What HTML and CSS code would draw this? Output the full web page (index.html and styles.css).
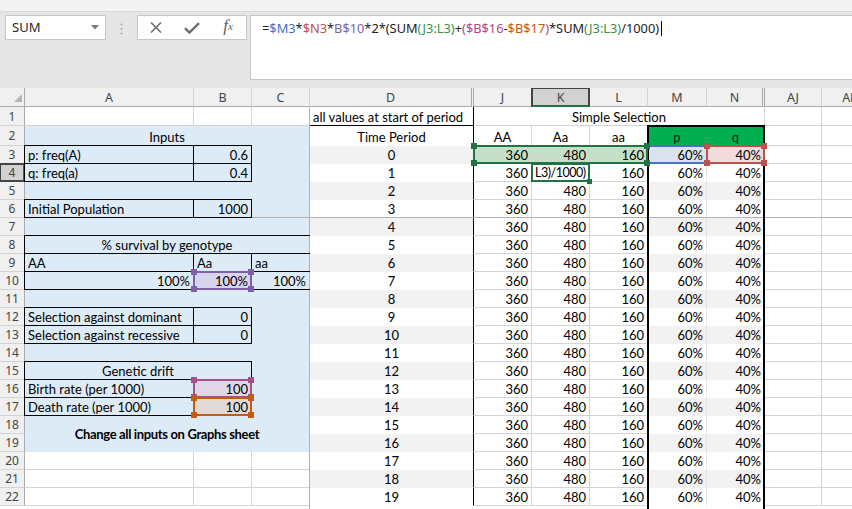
FILE: index.html
```html
<!DOCTYPE html>
<html>
<head>
<meta charset="utf-8">
<link rel="stylesheet" href="styles.css">
</head>
<body>
<div class="app">
  <div class="topstrip"></div>
  <div class="toolbar">
    <div class="namebox"><span>SUM</span><svg width="8" height="5" viewBox="0 0 8 5"><path d="M0 0H8L4 4.5Z" fill="#7a7a7a"/></svg></div>
    <div class="grip"><svg width="3" height="12" viewBox="0 0 3 12"><circle cx="1.5" cy="1.5" r="1" fill="#a8a8a8"/><circle cx="1.5" cy="6" r="1" fill="#a8a8a8"/><circle cx="1.5" cy="10.5" r="1" fill="#a8a8a8"/></svg></div>
    <div class="fxbox">
      <span class="ic"><svg width="12" height="11" viewBox="0 0 12 11"><path d="M1 0.5L11 10.5M11 0.5L1 10.5" stroke="#6e6e6e" stroke-width="1.6" fill="none"/></svg></span>
      <span class="ic"><svg width="16" height="12" viewBox="0 0 16 12"><path d="M1 6.2L5.4 10.6L15 1.2" fill="none" stroke="#6e6e6e" stroke-width="2.4"/></svg></span>
      <span class="ic fx">f<sub>x</sub></span>
    </div>
    <div class="formula"><span>=</span><span class="k1">$M3</span>*<span class="k2">$N3</span>*<span class="k3">B$10</span>*2*(SUM<span class="k4">(J3:L3)</span>+<span class="k5">($B$16</span>-<span class="k6">$B$17</span><span class="k5">)</span>*SUM<span class="k4">(J3:L3)</span>/1000)<span class="caret"></span></div>
  </div>

  <div class="sheet">
    <div class="cells">
      <!-- column headers -->
      <div class="corner"><svg width="25" height="19" viewBox="0 0 25 19"><path d="M22 6V14H14Z" fill="#b5b5b5"/></svg></div>
      <div class="ch">A</div><div class="ch">B</div><div class="ch">C</div><div class="ch hid">D</div>
      <div class="ch">J</div><div class="ch sel">K</div><div class="ch">L</div><div class="ch">M</div><div class="ch hid">N</div>
      <div class="ch">AJ</div><div class="ch">AK</div>

      <!-- row 1 -->
      <div class="rh">1</div><div class="c"></div><div class="c"></div><div class="c"></div>
      <div class="c d w dk">all values at start of period</div>
      <div class="c m span5">Simple Selection</div>
      <div class="c"></div><div class="c"></div>

      <!-- row 2 -->
      <div class="rh">2</div><div class="c b m span3">Inputs</div>
      <div class="c d w m">Time Period</div>
      <div class="c m">AA</div><div class="c m">Aa</div><div class="c m">aa</div>
      <div class="c m gh">p</div><div class="c m gh">q</div>
      <div class="c"></div><div class="c"></div>

      <!-- row 3 -->
      <div class="rh">3</div><div class="c b">p: freq(A)</div><div class="c b r">0.6</div><div class="c b"></div>
      <div class="c d m">0</div>
      <div class="c r fg">360</div><div class="c r fg">480</div><div class="c r fg">160</div>
      <div class="c r fb">60%</div><div class="c r fr">40%</div>
      <div class="c"></div><div class="c"></div>

      <!-- row 4 -->
      <div class="rh sel">4</div><div class="c b">q: freq(a)</div><div class="c b r">0.4</div><div class="c b"></div>
      <div class="c d w m">1</div>
      <div class="c r">360</div><div class="c edit">L3)/1000)</div><div class="c r">160</div>
      <div class="c r mn w">60%</div><div class="c r mn w">40%</div>
      <div class="c"></div><div class="c"></div>

      <!-- row 5 -->
      <div class="rh">5</div><div class="c b"></div><div class="c b"></div><div class="c b"></div>
      <div class="c d m">2</div>
      <div class="c r">360</div><div class="c r">480</div><div class="c r">160</div>
      <div class="c r mn">60%</div><div class="c r mn">40%</div>
      <div class="c"></div><div class="c"></div>

      <!-- row 6 -->
      <div class="rh">6</div><div class="c b">Initial Population</div><div class="c b r">1000</div><div class="c b"></div>
      <div class="c d w m">3</div>
      <div class="c r">360</div><div class="c r">480</div><div class="c r">160</div>
      <div class="c r mn w">60%</div><div class="c r mn w">40%</div>
      <div class="c"></div><div class="c"></div>

      <!-- row 7 -->
      <div class="rh">7</div><div class="c b"></div><div class="c b"></div><div class="c b"></div>
      <div class="c d m">4</div>
      <div class="c r">360</div><div class="c r">480</div><div class="c r">160</div>
      <div class="c r mn">60%</div><div class="c r mn">40%</div>
      <div class="c"></div><div class="c"></div>

      <!-- row 8 -->
      <div class="rh">8</div><div class="c b m span3">% survival by genotype</div>
      <div class="c d w m">5</div>
      <div class="c r">360</div><div class="c r">480</div><div class="c r">160</div>
      <div class="c r mn w">60%</div><div class="c r mn w">40%</div>
      <div class="c"></div><div class="c"></div>

      <!-- row 9 -->
      <div class="rh">9</div><div class="c b">AA</div><div class="c b">Aa</div><div class="c b">aa</div>
      <div class="c d m">6</div>
      <div class="c r">360</div><div class="c r">480</div><div class="c r">160</div>
      <div class="c r mn">60%</div><div class="c r mn">40%</div>
      <div class="c"></div><div class="c"></div>

      <!-- row 10 -->
      <div class="rh">10</div><div class="c b r">100%</div><div class="c b r fp">100%</div><div class="c b r">100%</div>
      <div class="c d w m">7</div>
      <div class="c r">360</div><div class="c r">480</div><div class="c r">160</div>
      <div class="c r mn w">60%</div><div class="c r mn w">40%</div>
      <div class="c"></div><div class="c"></div>

      <!-- row 11 -->
      <div class="rh">11</div><div class="c b"></div><div class="c b"></div><div class="c b"></div>
      <div class="c d m">8</div>
      <div class="c r">360</div><div class="c r">480</div><div class="c r">160</div>
      <div class="c r mn">60%</div><div class="c r mn">40%</div>
      <div class="c"></div><div class="c"></div>

      <!-- row 12 -->
      <div class="rh">12</div><div class="c b">Selection against dominant</div><div class="c b r">0</div><div class="c b"></div>
      <div class="c d w m">9</div>
      <div class="c r">360</div><div class="c r">480</div><div class="c r">160</div>
      <div class="c r mn w">60%</div><div class="c r mn w">40%</div>
      <div class="c"></div><div class="c"></div>

      <!-- row 13 -->
      <div class="rh">13</div><div class="c b">Selection against recessive</div><div class="c b r">0</div><div class="c b"></div>
      <div class="c d m">10</div>
      <div class="c r">360</div><div class="c r">480</div><div class="c r">160</div>
      <div class="c r mn">60%</div><div class="c r mn">40%</div>
      <div class="c"></div><div class="c"></div>

      <!-- row 14 -->
      <div class="rh">14</div><div class="c b"></div><div class="c b"></div><div class="c b"></div>
      <div class="c d w m">11</div>
      <div class="c r">360</div><div class="c r">480</div><div class="c r">160</div>
      <div class="c r mn w">60%</div><div class="c r mn w">40%</div>
      <div class="c"></div><div class="c"></div>

      <!-- row 15 -->
      <div class="rh">15</div><div class="c b m span2">Genetic drift</div><div class="c b"></div>
      <div class="c d m">12</div>
      <div class="c r">360</div><div class="c r">480</div><div class="c r">160</div>
      <div class="c r mn">60%</div><div class="c r mn">40%</div>
      <div class="c"></div><div class="c"></div>

      <!-- row 16 -->
      <div class="rh">16</div><div class="c b">Birth rate (per 1000)</div><div class="c b r fm">100</div><div class="c b"></div>
      <div class="c d w m">13</div>
      <div class="c r">360</div><div class="c r">480</div><div class="c r">160</div>
      <div class="c r mn w">60%</div><div class="c r mn w">40%</div>
      <div class="c"></div><div class="c"></div>

      <!-- row 17 -->
      <div class="rh">17</div><div class="c b">Death rate (per 1000)</div><div class="c b r fo">100</div><div class="c b"></div>
      <div class="c d m">14</div>
      <div class="c r">360</div><div class="c r">480</div><div class="c r">160</div>
      <div class="c r mn">60%</div><div class="c r mn">40%</div>
      <div class="c"></div><div class="c"></div>

      <!-- row 18 -->
      <div class="rh">18</div><div class="c b note">Change all inputs on Graphs sheet</div>
      <div class="c d w m">15</div>
      <div class="c r">360</div><div class="c r">480</div><div class="c r">160</div>
      <div class="c r mn w">60%</div><div class="c r mn w">40%</div>
      <div class="c"></div><div class="c"></div>

      <!-- row 19 -->
      <div class="rh">19</div>
      <div class="c d m">16</div>
      <div class="c r">360</div><div class="c r">480</div><div class="c r">160</div>
      <div class="c r mn">60%</div><div class="c r mn">40%</div>
      <div class="c"></div><div class="c"></div>

      <!-- row 20 -->
      <div class="rh">20</div><div class="c"></div><div class="c"></div><div class="c"></div>
      <div class="c d w m">17</div>
      <div class="c r">360</div><div class="c r">480</div><div class="c r">160</div>
      <div class="c r mn w">60%</div><div class="c r mn w">40%</div>
      <div class="c"></div><div class="c"></div>

      <!-- row 21 -->
      <div class="rh">21</div><div class="c"></div><div class="c"></div><div class="c"></div>
      <div class="c d m">18</div>
      <div class="c r">360</div><div class="c r">480</div><div class="c r">160</div>
      <div class="c r mn">60%</div><div class="c r mn">40%</div>
      <div class="c"></div><div class="c"></div>

      <!-- row 22 -->
      <div class="rh">22</div><div class="c"></div><div class="c"></div><div class="c"></div>
      <div class="c d w m">19</div>
      <div class="c r">360</div><div class="c r">480</div><div class="c r">160</div>
      <div class="c r mn w">60%</div><div class="c r mn w">40%</div>
      <div class="c"></div><div class="c"></div>
    </div>

    <div class="overlay">
      <div class="frz-v"></div>
      <div class="frz-h"></div>

      <div class="bx at-a3"></div><div class="bx at-b3"></div>
      <div class="bx at-a4"></div><div class="bx at-b4"></div>
      <div class="bx at-a6"></div><div class="bx at-b6"></div>
      <div class="bx nr at-a8"></div>
      <div class="bx at-a9"></div><div class="bx at-b9"></div><div class="bx nr at-c9"></div>
      <div class="bx at-a10"></div><div class="bx at-b10"></div><div class="bx nr at-c10"></div>
      <div class="bx at-a12"></div><div class="bx at-b12"></div>
      <div class="bx at-a13"></div><div class="bx at-b13"></div>
      <div class="bx at-a15"></div>
      <div class="bx at-a16"></div><div class="bx at-b16"></div>
      <div class="bx at-a17"></div><div class="bx at-b17"></div>

      <div class="thick at-mn"></div>

      <div class="sel s-blue at-m3"></div>
      <div class="sel s-red at-n3"><i class="h tl"></i><i class="h tr"></i><i class="h bl"></i><i class="h br"></i></div>
      <div class="sel s-green at-j3"><i class="h tl"></i><i class="h tr"></i><i class="h bl"></i><i class="h br"></i></div>
      <div class="sel s-active at-k4"><i class="h br"></i></div>
      <div class="sel s-purple at-b10"><i class="h tl"></i><i class="h tr"></i><i class="h bl"></i><i class="h br"></i></div>
      <div class="sel s-mag at-b16"><i class="h tl"></i><i class="h tr"></i><i class="h bl"></i><i class="h br"></i></div>
      <div class="sel s-orange at-b17"><i class="h tl"></i><i class="h tr"></i><i class="h bl"></i><i class="h br"></i></div>
    </div>
  </div>
</div>
</body>
</html>
```

FILE: styles.css
```css
* { box-sizing: border-box; margin: 0; padding: 0; }

html, body {
  width: 852px;
  height: 509px;
  overflow: hidden;
}

body {
  background: #e6e6e6;
  font-family: Lato, "Liberation Sans", sans-serif;
  color: #000;
}

.app { width: 852px; height: 509px; overflow: hidden; }

/* ---------- top toolbar ---------- */
.topstrip {
  height: 12px;
  background: #f3f3f3;
  border-bottom: 1px solid #d8d8d8;
}

.toolbar {
  height: 76px;
  display: flex;
  align-items: flex-start;
  padding: 3px 0 0 5px;
  font-family: "Noto Sans", "Open Sans", sans-serif;
}

.namebox {
  width: 101px;
  height: 25px;
  background: #fff;
  border: 1px solid #c6c6c6;
  display: flex;
  align-items: center;
  justify-content: space-between;
  padding: 0 6px 1px 6px;
  font-size: 13px;
  color: #262626;
}

.grip {
  width: 31px;
  display: flex;
  justify-content: center;
  padding-top: 8px;
}

.fxbox {
  width: 110px;
  height: 25px;
  background: #fff;
  border: 1px solid #c6c6c6;
  display: flex;
  align-items: center;
}

.ic {
  width: 36px;
  display: flex;
  justify-content: center;
  align-items: center;
}

.fx {
  font-family: "Liberation Serif", "DejaVu Serif", serif;
  font-style: italic;
  font-size: 17px;
  color: #5e5e5e;
  line-height: 16px;
  padding-bottom: 3px;
}
.fx sub { font-size: 11px; vertical-align: -3px; }

.formula {
  flex: 1;
  margin-left: 3px;
  margin-right: -3px;
  height: 65px;
  background: #fff;
  border: 1px solid #c6c6c6;
  padding: 3px 0 0 11px;
  font-size: 12.8px;
  line-height: 18px;
  color: #222;
  white-space: nowrap;
}

.k1 { color: #3f6fc6; }
.k2 { color: #c0504d; }
.k3 { color: #8064a2; }
.k4 { color: #3b8f4a; }
.k5 { color: #b0478c; }
.k6 { color: #c65911; }

.caret {
  display: inline-block;
  width: 1px;
  height: 15px;
  background: #000;
  margin-left: 2px;
  vertical-align: -3px;
}

/* ---------- sheet ---------- */
.sheet {
  position: relative;
  background: #fff;
  height: 421px;
  overflow: hidden;
}

.cells, .overlay {
  display: grid;
  grid-template-columns: 25px 169px 58px 58px 164px 58px 58px 58px 59px 58px 57px 57px;
  grid-template-rows: 19px 19px 20px repeat(21, 18px);
}

.overlay {
  position: absolute;
  left: 0;
  top: 0;
  right: 0;
  bottom: 0;
  pointer-events: none;
}

.corner {
  background: #f0f0f0;
  border-right: 1px solid #ababab;
  border-bottom: 1px solid #ababab;
}
.corner svg { display: block; }

.ch {
  background: #f0f0f0;
  border-right: 1px solid #d4d4d4;
  border-bottom: 1px solid #ababab;
  font-family: "Noto Sans", "Open Sans", sans-serif;
  font-size: 12.5px;
  color: #444;
  display: flex;
  align-items: center;
  justify-content: center;
  white-space: nowrap;
  overflow: hidden;
}
.ch.hid { border-right: 3px double #a9a9a9; }
.ch.sel {
  background: #d2d2d2;
  border-bottom: 2px solid #217346;
}

.rh {
  background: #f0f0f0;
  border-right: 1px solid #ababab;
  border-bottom: 1px solid #d4d4d4;
  font-family: "Noto Sans", "Open Sans", sans-serif;
  font-size: 12px;
  color: #444;
  display: flex;
  align-items: center;
  justify-content: center;
}
.rh.sel {
  background: #d2d2d2;
  border-right: 2px solid #217346;
}

.c {
  border-right: 1px solid #d4d4d4;
  border-bottom: 1px solid #d4d4d4;
  padding: 0 3px;
  font-size: 13px;
  line-height: 16px;
  white-space: nowrap;
  overflow: hidden;
  display: flex;
  align-items: flex-end;
  background: #fff;
}

.r { justify-content: flex-end; }
.m { justify-content: center; }

.span2 { grid-column: span 2; }
.span3 { grid-column: span 3; }
.span5 { grid-column: span 5; }

/* blue input panel */
.b {
  background: #ddebf7;
  border-color: #ddebf7;
}

/* column D */
.d {
  background: #f2f2f2;
  border-bottom-color: #f2f2f2;
  border-right: 1px solid #000;
}
.d.w {
  background: #fff;
  border-bottom-color: #fff;
}
.d.dk { border-bottom-color: #000; }

/* columns M, N banded */
.mn {
  background: #f2f2f2;
  border-bottom-color: #f2f2f2;
  border-right-color: #e4e4e4;
}
.mn.w {
  background: #fff;
  border-bottom-color: #fff;
}

.gh {
  background: #00b050;
  border-color: #00b050;
  color: #10240f;
}

.note {
  grid-column: span 3;
  grid-row: span 2;
  align-items: center;
  justify-content: center;
  font-weight: bold;
  letter-spacing: -0.35px;
}

.edit {
  padding: 0 0 0 3px;
  font-size: 12.5px;
  letter-spacing: -0.5px;
}

/* range highlight fills */
.fg { background: #c7dfc8; }
.fb { background: #dbe3f1; border-bottom-color: #dbe3f1; }
.fr { background: #f2dcdb; border-bottom-color: #f2dcdb; }
.fp { background: #d9d4ee; }
.fm { background: #dfd6e7; }
.fo { background: #e0d9d6; }

/* ---------- overlay ---------- */
.frz-v {
  grid-column: 4;
  grid-row: 2 / -1;
  border-right: 1px solid #b2b2b2;
}
.frz-h {
  grid-column: 2 / -1;
  grid-row: 7;
  border-bottom: 1px solid #b2b2b2;
}

.bx {
  border: 1px solid #000;
  margin: -1px 0 0 -1px;
}
.bx.nr { border-right: none; }

.at-a3 { grid-area: 4 / 2; }
.at-b3 { grid-area: 4 / 3; }
.at-a4 { grid-area: 5 / 2; }
.at-b4 { grid-area: 5 / 3; }
.at-a6 { grid-area: 7 / 2; }
.at-b6 { grid-area: 7 / 3; }
.at-a8 { grid-area: 9 / 2 / 10 / 5; }
.at-a9 { grid-area: 10 / 2; }
.at-b9 { grid-area: 10 / 3; }
.at-c9 { grid-area: 10 / 4; }
.at-a10 { grid-area: 11 / 2; }
.at-b10 { grid-area: 11 / 3; }
.at-c10 { grid-area: 11 / 4; }
.at-a12 { grid-area: 13 / 2; }
.at-b12 { grid-area: 13 / 3; }
.at-a13 { grid-area: 14 / 2; }
.at-b13 { grid-area: 14 / 3; }
.at-a15 { grid-area: 16 / 2 / 17 / 4; }
.at-a16 { grid-area: 17 / 2; }
.at-b16 { grid-area: 17 / 3; }
.at-a17 { grid-area: 18 / 2; }
.at-b17 { grid-area: 18 / 3; }
.at-mn { grid-area: 3 / 9 / 25 / 11; }
.at-m3 { grid-area: 4 / 9; }
.at-n3 { grid-area: 4 / 10; }
.at-j3 { grid-area: 4 / 6 / 5 / 9; }
.at-k4 { grid-area: 5 / 7; }

.thick {
  border: 2px solid #000;
  margin: -1px 0 0 -1px;
}

.sel {
  position: relative;
  border: 2px solid;
  margin: -1px 0 0 -1px;
}
.s-blue { border-color: #4472c4; border-left: none; border-right: none; }
.s-red { border-color: #c0504d; }
.s-green { border-color: #217346; }
.s-active { border-color: #217346; }
.s-purple { border-color: #7e5fa9; }
.s-mag { border-color: #a4508c; }
.s-orange { border-color: #c55a11; }

.h {
  position: absolute;
  width: 6px;
  height: 6px;
}
.s-red .h { background: #c0504d; }
.s-green .h, .s-active .h { background: #217346; }
.s-purple .h { background: #7e5fa9; }
.s-mag .h { background: #a4508c; }
.s-orange .h { background: #c55a11; }

.h.tl { left: -4px; top: -4px; }
.h.tr { right: -4px; top: -4px; }
.h.bl { left: -4px; bottom: -4px; }
.h.br { right: -4px; bottom: -4px; }
.s-active .h.br { width: 5px; height: 5px; }
```
